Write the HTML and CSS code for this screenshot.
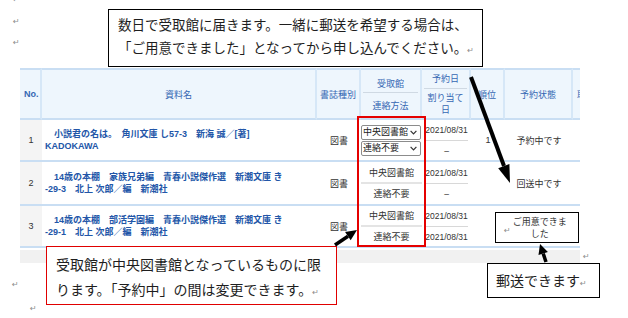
FILE: index.html
```html
<!DOCTYPE html>
<html>
<head>
    <title>予約一覧</title>
    <link rel="stylesheet" href="styles.css">
</head>
<body>
    <div class="page">
        <div class="top">
            <div class="marks">
                <span class="ret">↵</span>
                <span class="ret">↵</span>
                <span class="ret">↵</span>
            </div>
            <div class="note note-top">
                数日で受取館に届きます。一緒に郵送を希望する場合は、<br>
                「ご用意できました」となってから申し込んでください。<span class="ret">↵</span>
            </div>
        </div>

        <div class="grid-row">
            <div class="grid">
                <table class="holds">
                    <colgroup>
                        <col class="c-no">
                        <col class="c-title">
                        <col class="c-kind">
                        <col class="c-pickup">
                        <col class="c-date">
                        <col class="c-rank">
                        <col class="c-state">
                        <col class="c-last">
                    </colgroup>
                    <thead>
                        <tr>
                            <th class="no-head">No.</th>
                            <th>資料名</th>
                            <th>書誌種別</th>
                            <th>
                                <div class="split head">
                                    <div class="a">受取館</div>
                                    <div class="b">連絡方法</div>
                                </div>
                            </th>
                            <th>
                                <div class="split head date-head">
                                    <div class="a">予約日</div>
                                    <div class="b">割り当て<br>日</div>
                                </div>
                            </th>
                            <th>順位</th>
                            <th>予約状態</th>
                            <th class="last">取消</th>
                        </tr>
                    </thead>
                    <tbody>
                        <tr class="r1">
                            <td class="no">1</td>
                            <td class="title">　小説君の名は。　角川文庫 し57-3　新海 誠／[著]<br>KADOKAWA</td>
                            <td>図書</td>
                            <td class="pickup">
                                <div class="pick"><span>中央図書館</span><svg width="7" height="5" viewBox="0 0 7 5"><polyline points="0.6,0.8 3.5,3.8 6.4,0.8" /></svg></div>
                                <div class="pick"><span>連絡不要</span><svg width="7" height="5" viewBox="0 0 7 5"><polyline points="0.6,0.8 3.5,3.8 6.4,0.8" /></svg></div>
                            </td>
                            <td class="date">
                                <div class="split">
                                    <div class="a">2021/08/31</div>
                                    <div class="b">–</div>
                                </div>
                            </td>
                            <td>1</td>
                            <td>予約中です</td>
                            <td></td>
                        </tr>
                        <tr class="r2">
                            <td class="no">2</td>
                            <td class="title">　14歳の本棚　家族兄弟編　青春小説傑作選　新潮文庫 き<br>-29-3　北上 次郎／編　新潮社</td>
                            <td>図書</td>
                            <td class="pickup">
                                <div class="split fixed">
                                    <div class="a">中央図書館</div>
                                    <div class="b">連絡不要</div>
                                </div>
                            </td>
                            <td class="date">
                                <div class="split">
                                    <div class="a">2021/08/31</div>
                                    <div class="b">–</div>
                                </div>
                            </td>
                            <td></td>
                            <td>回送中です</td>
                            <td></td>
                        </tr>
                        <tr class="r3">
                            <td class="no">3</td>
                            <td class="title">　14歳の本棚　部活学園編　青春小説傑作選　新潮文庫 き<br>-29-1　北上 次郎／編　新潮社</td>
                            <td>図書</td>
                            <td class="pickup">
                                <div class="split fixed">
                                    <div class="a">中央図書館</div>
                                    <div class="b">連絡不要</div>
                                </div>
                            </td>
                            <td class="date">
                                <div class="split">
                                    <div class="a">2021/08/31</div>
                                    <div class="b">2021/08/31</div>
                                </div>
                            </td>
                            <td></td>
                            <td></td>
                            <td></td>
                        </tr>
                    </tbody>
                </table>
                <div class="scroll"></div>
            </div>
            <span class="ret row-end">↵</span>
        </div>

        <div class="tail">
            <span class="ret">↵</span>
            <span class="ret indent">↵</span>
        </div>

        <!-- callouts drawn over the table -->
        <div class="frame"></div>

        <div class="note note-ready">
            <span class="ret">↵</span>
            <div class="ready-text">ご用意できま<br>した</div>
        </div>

        <div class="note note-left">
            受取館が中央図書館となっているものに限<br>
            ります。「予約中」の間は変更できます。<span class="ret">↵</span>
        </div>

        <div class="note note-mail">郵送できます<span class="ret">↵</span></div>

        <svg class="arrows" width="628" height="318" viewBox="0 0 628 318">
            <line x1="471" y1="77" x2="504" y2="166" />
            <polygon points="510,183 498.2,168.2 509.4,164" />
            <line x1="335" y1="245" x2="348" y2="236.2" class="thin" />
            <polygon points="357,230 350.7,240.3 345.1,232.1" />
            <line x1="546" y1="262" x2="543.2" y2="253.5" class="thin" />
            <polygon points="540,244 547.9,251.9 538.5,255.1" />
        </svg>
    </div>
</body>
</html>
```

FILE: styles.css
```css
* {
    box-sizing: border-box;
}
body {
    margin: 0;
    background-color: white;
    font-family: "Noto Sans CJK JP", sans-serif;
    color: #1e1e1e;
}
.page {
    position: relative;
    width: 628px;
    height: 318px;
    overflow: hidden;
}
.ret {
    font-family: "DejaVu Sans", sans-serif;
    font-size: 8px;
    color: #8c8c8c;
}

/* top part */
.top {
    display: flex;
    height: 68px;
}
.marks {
    width: 108px;
    padding-left: 13px;
    margin-top: -11px;
    display: flex;
    flex-direction: column;
    line-height: 21.5px;
}
.note {
    background-color: white;
    border: 1px solid #000;
    white-space: nowrap;
}
.note-top {
    margin-top: 9px;
    width: 375px;
    height: 58px;
    padding: 3px 0 0 9px;
    font-size: 13.5px;
    line-height: 23px;
}

/* table */
.grid-row {
    display: flex;
    align-items: flex-end;
}
.grid {
    margin-left: 20px;
    width: 560px;
    overflow: hidden;
}
.holds {
    table-layout: fixed;
    width: 593px;
    border-collapse: separate;
    border-spacing: 0;
    font-family: "Liberation Sans", "Noto Sans CJK JP", sans-serif;
    font-size: 9px;
    color: #333;
}
.c-no { width: 22px; }
.c-title { width: 275px; }
.c-kind { width: 44px; }
.c-pickup { width: 61px; }
.c-date { width: 49px; }
.c-rank { width: 34px; }
.c-state { width: 68px; }
.c-last { width: 40px; }

.holds th {
    height: 52px;
    padding: 0 2px;
    background-color: #eef6fd;
    color: #3567b3;
    font-weight: normal;
    border-top: 2px solid #c9def3;
    border-bottom: 2px solid #c9def3;
    border-right: 2px solid #d6e7f7;
    vertical-align: middle;
    text-align: center;
}
.holds th.no-head {
    font-weight: bold;
    text-align: left;
    padding-left: 4px;
}
.holds th.last {
    text-align: left;
    padding-left: 4px;
    border-right: none;
}
.holds td {
    padding: 0 3px;
    border-bottom: 2px solid #c9def3;
    text-align: center;
    vertical-align: middle;
}
.r1 td { height: 42px; }
.r2 td { height: 44px; }
.r3 td { height: 42px; }
.holds td.no {
    background-color: #f4f4f4;
}
.holds td.title {
    text-align: left;
    padding-left: 3px;
    line-height: 12px;
    font-weight: bold;
    color: #2256a8;
    white-space: nowrap;
}
.holds td.pickup {
    padding: 0;
}
.holds td.date {
    font-size: 8.5px;
}

.split {
    display: flex;
    flex-direction: column;
}
.split .a {
    line-height: 12px;
    padding-bottom: 4px;
    border-bottom: 1px solid #d8d8d8;
}
.split .b {
    line-height: 12px;
    padding-top: 4px;
}
.split.fixed .a {
    border-bottom: 2px solid #e4e4e4;
    padding-bottom: 3px;
}
.split.head .a {
    line-height: 14px;
    padding: 2px 0 1px;
    border-bottom-color: #cfd9e3;
}
.split.head .b {
    line-height: 14px;
    padding-top: 6px;
}
.split.date-head .a {
    line-height: 12px;
    padding: 0 0 3px;
}
.split.date-head .b {
    line-height: 12px;
    padding-top: 3px;
}

.pick {
    display: flex;
    align-items: center;
    justify-content: space-between;
    width: 60px;
    height: 15px;
    margin: 1px 0;
    padding: 0 3px 0 1px;
    border: 1px solid #8c8c8c;
    border-radius: 2px;
    background-color: white;
    font-size: 9px;
    line-height: 13px;
    color: #222;
    white-space: nowrap;
}
.pick svg {
    flex-shrink: 0;
}
.pick svg polyline {
    fill: none;
    stroke: #333;
    stroke-width: 1.2;
}

.scroll {
    margin-top: 2px;
    height: 13px;
    background-color: #f1f1f1;
}
.row-end {
    margin-left: 3px;
    line-height: 10px;
    margin-bottom: 1px;
}
.tail {
    display: flex;
    flex-direction: column;
    padding-top: 10px;
    line-height: 24px;
}
.tail .ret {
    padding-left: 12px;
}
.tail .indent {
    padding-left: 30px;
}

/* overlays */
.frame {
    position: absolute;
    left: 357px;
    top: 116px;
    width: 69px;
    height: 131px;
    border: 2px solid #e50000;
}
.note-ready {
    position: absolute;
    left: 495px;
    top: 212px;
    width: 84px;
    height: 31px;
    display: flex;
    align-items: center;
    padding-left: 8px;
    font-size: 9px;
    color: #333;
}
.note-ready .ret {
    margin-top: 6px;
    line-height: 10px;
}
.ready-text {
    width: 58px;
    text-align: center;
    line-height: 12px;
}
.note-left {
    position: absolute;
    left: 46px;
    top: 246px;
    width: 291px;
    height: 59px;
    padding: 5px 0 0 9px;
    border-color: #e00000;
    font-size: 14px;
    line-height: 25px;
}
.note-mail {
    position: absolute;
    left: 487px;
    top: 263px;
    width: 113px;
    height: 35px;
    padding-left: 8px;
    font-size: 14px;
    line-height: 33px;
}
.arrows {
    position: absolute;
    left: 0;
    top: 0;
    pointer-events: none;
}
.arrows line {
    stroke: #000;
    stroke-width: 4;
}
.arrows line.thin {
    stroke-width: 3.5;
}
.arrows polygon {
    fill: #000;
}
```
